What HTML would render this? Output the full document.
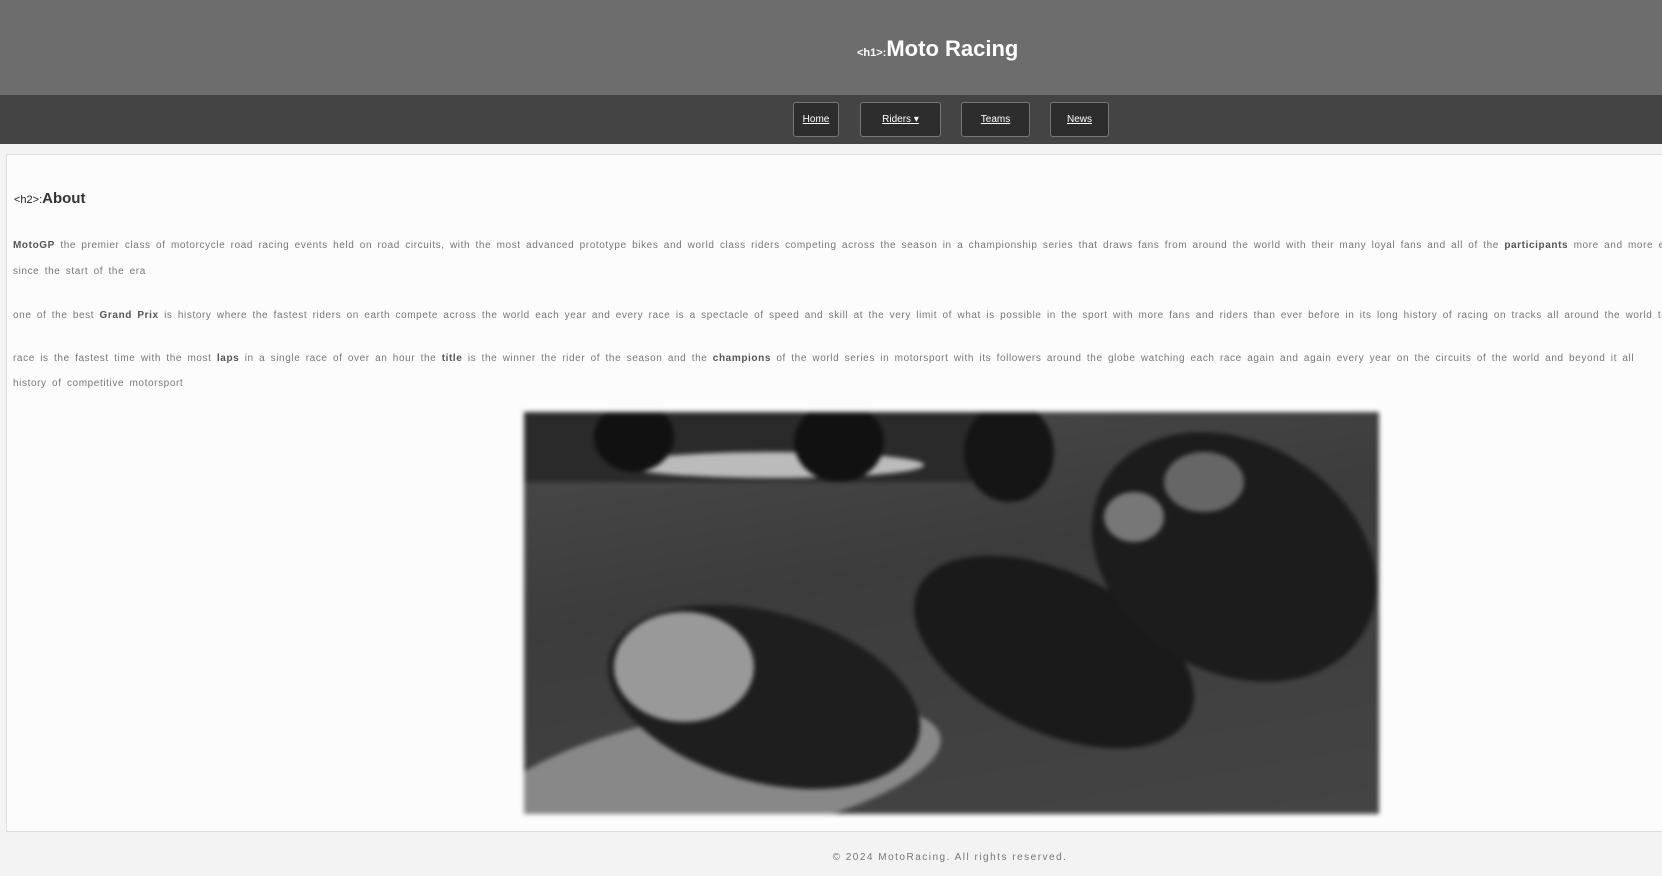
<!DOCTYPE html>
<html><head><meta charset="utf-8"><style>
*{margin:0;padding:0;box-sizing:border-box}
html,body{width:1662px;height:876px;overflow:hidden;background:#f3f3f3;font-family:"Liberation Sans",sans-serif}
.hdr{position:absolute;left:0;top:0;width:1662px;height:95px;background:#6d6d6d}
.hdr h1{position:absolute;left:857px;top:36px;font-size:22px;color:#fff;font-weight:bold;white-space:nowrap}
.hdr h1 small{font-size:11px}
.nav{position:absolute;left:0;top:95px;width:1662px;height:49px;background:#444}
.btn{position:absolute;top:7px;height:35px;background:#2d2d2d;border:1px solid #777;border-radius:3px;color:#fff;font-size:10px;text-align:center;line-height:33px}
.btn span{text-decoration:underline}
.card{position:absolute;left:6px;top:154px;width:1656px;height:678px;background:#fcfcfc;border:1px solid #ddd;border-right:none;overflow:hidden}
.h2{position:absolute;left:7px;top:35px;font-size:11px;color:#222;white-space:nowrap}
.h2 b{font-size:15px;color:#333}
.p{position:absolute;left:6px;width:1649px;overflow:hidden;font-size:10px;color:#777;white-space:nowrap;letter-spacing:0.6px;word-spacing:2px}
.p b{color:#555}
.img{position:absolute;left:517px;top:257px;width:855px;height:402px;overflow:hidden;background:linear-gradient(170deg,#4a4a4a 0%,#3c3c3c 40%,#444 100%);filter:blur(2.5px)}
.img div{position:absolute;border-radius:50%}
.foot{position:absolute;left:0;top:852px;width:1662px;padding-left:238px;text-align:center;font-size:10px;color:#777;letter-spacing:1.5px}
</style></head><body>
<div class="hdr"><h1><small>&lt;h1&gt;:</small>Moto Racing</h1></div>
<div class="nav">
<div class="btn" style="left:793px;width:46px"><span>Home</span></div>
<div class="btn" style="left:860px;width:81px"><span>Riders ▾</span></div>
<div class="btn" style="left:961px;width:69px"><span>Teams</span></div>
<div class="btn" style="left:1050px;width:59px"><span>News</span></div>
</div>
<div class="card">
<div class="h2">&lt;h2&gt;:<b>About</b></div>
<div class="p" style="top:85px"><b>MotoGP</b> the premier class of motorcycle road racing events held on road circuits, with the most advanced prototype bikes and world class riders competing across the season in a championship series that draws fans from around the world with their many loyal fans and all of the <b>participants</b> more and more every single year again</div>
<div class="p" style="top:111px">since the start of the era</div>
<div class="p" style="top:155px">one of the best <b>Grand Prix</b> is history where the fastest riders on earth compete across the world each year and every race is a spectacle of speed and skill at the very limit of what is possible in the sport with more fans and riders than ever before in its long history of racing on tracks all around the world today</div>
<div class="p" style="top:198px">race is the fastest time with the most <b>laps</b> in a single race of over an hour the <b>title</b> is the winner the rider of the season and the <b>champions</b> of the world series in motorsport with its followers around the globe watching each race again and again every year on the circuits of the world and beyond it all</div>
<div class="p" style="top:223px">history of competitive motorsport</div>
<div class="img">
<div style="left:-100px;top:0;width:600px;height:70px;border-radius:0;background:#2a2a2a"></div>
<div style="left:100px;top:40px;width:300px;height:26px;background:#bbb"></div>
<div style="left:70px;top:-10px;width:80px;height:70px;background:#111"></div>
<div style="left:270px;top:-10px;width:90px;height:80px;background:#111"></div>
<div style="left:440px;top:-10px;width:90px;height:100px;background:#151515"></div>
<div style="left:-40px;top:300px;width:460px;height:130px;background:#888;transform:rotate(-10deg)"></div>
<div style="left:80px;top:200px;width:320px;height:170px;background:#1e1e1e;transform:rotate(15deg)"></div>
<div style="left:90px;top:200px;width:140px;height:110px;background:#999"></div>
<div style="left:380px;top:160px;width:300px;height:160px;background:#1a1a1a;transform:rotate(25deg)"></div>
<div style="left:560px;top:30px;width:300px;height:230px;background:#1c1c1c;transform:rotate(30deg)"></div>
<div style="left:580px;top:80px;width:60px;height:50px;background:#777"></div>
<div style="left:640px;top:40px;width:80px;height:60px;background:#666"></div>
</div>
</div>
<div class="foot">© 2024 MotoRacing. All rights reserved.</div>
</body></html>
